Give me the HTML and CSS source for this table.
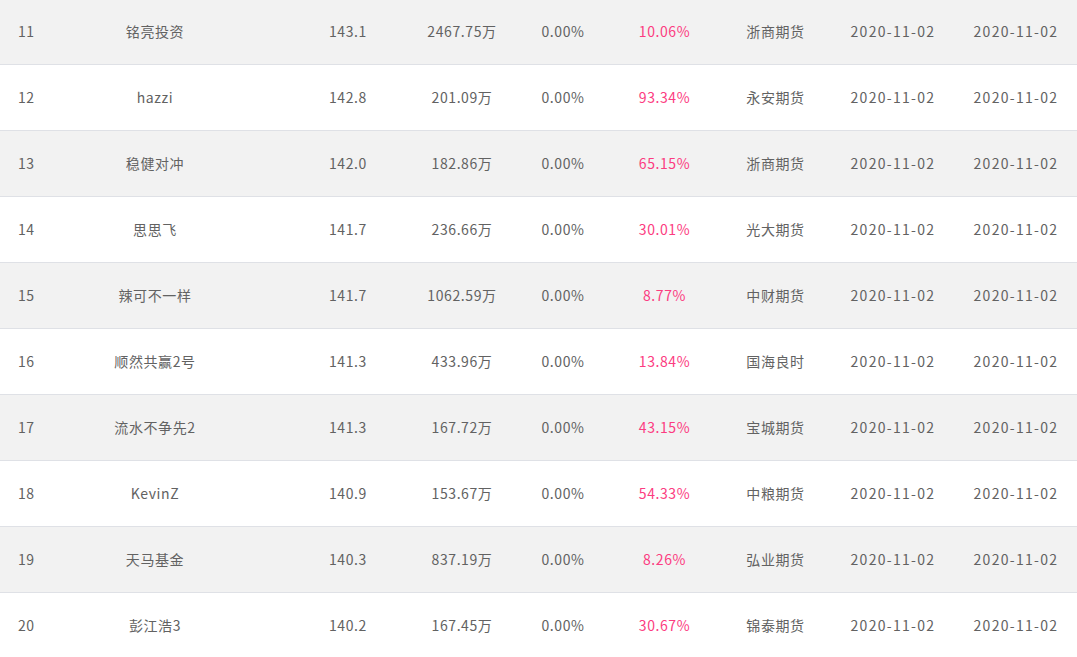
FILE: index.html
```html
<!DOCTYPE html>
<html lang="zh-CN">
<head>
<meta charset="utf-8">
<title>排行</title>
<link rel="stylesheet" href="styles.css">
</head>
<body>
<div class="table">
  <div class="row first"><div class="c rank">11</div><div class="c name">铭亮投资</div><div class="c">143.1</div><div class="c">2467.75万</div><div class="c">0.00%</div><div class="c pink">10.06%</div><div class="c">浙商期货</div><div class="c date">2020-11-02</div><div class="c date">2020-11-02</div></div>
  <div class="row"><div class="c rank">12</div><div class="c name">hazzi</div><div class="c">142.8</div><div class="c">201.09万</div><div class="c">0.00%</div><div class="c pink">93.34%</div><div class="c">永安期货</div><div class="c date">2020-11-02</div><div class="c date">2020-11-02</div></div>
  <div class="row"><div class="c rank">13</div><div class="c name">稳健对冲</div><div class="c">142.0</div><div class="c">182.86万</div><div class="c">0.00%</div><div class="c pink">65.15%</div><div class="c">浙商期货</div><div class="c date">2020-11-02</div><div class="c date">2020-11-02</div></div>
  <div class="row"><div class="c rank">14</div><div class="c name">思思飞</div><div class="c">141.7</div><div class="c">236.66万</div><div class="c">0.00%</div><div class="c pink">30.01%</div><div class="c">光大期货</div><div class="c date">2020-11-02</div><div class="c date">2020-11-02</div></div>
  <div class="row"><div class="c rank">15</div><div class="c name">辣可不一样</div><div class="c">141.7</div><div class="c">1062.59万</div><div class="c">0.00%</div><div class="c pink">8.77%</div><div class="c">中财期货</div><div class="c date">2020-11-02</div><div class="c date">2020-11-02</div></div>
  <div class="row"><div class="c rank">16</div><div class="c name">顺然共赢2号</div><div class="c">141.3</div><div class="c">433.96万</div><div class="c">0.00%</div><div class="c pink">13.84%</div><div class="c">国海良时</div><div class="c date">2020-11-02</div><div class="c date">2020-11-02</div></div>
  <div class="row"><div class="c rank">17</div><div class="c name">流水不争先2</div><div class="c">141.3</div><div class="c">167.72万</div><div class="c">0.00%</div><div class="c pink">43.15%</div><div class="c">宝城期货</div><div class="c date">2020-11-02</div><div class="c date">2020-11-02</div></div>
  <div class="row"><div class="c rank">18</div><div class="c name">KevinZ</div><div class="c">140.9</div><div class="c">153.67万</div><div class="c">0.00%</div><div class="c pink">54.33%</div><div class="c">中粮期货</div><div class="c date">2020-11-02</div><div class="c date">2020-11-02</div></div>
  <div class="row"><div class="c rank">19</div><div class="c name">天马基金</div><div class="c">140.3</div><div class="c">837.19万</div><div class="c">0.00%</div><div class="c pink">8.26%</div><div class="c">弘业期货</div><div class="c date">2020-11-02</div><div class="c date">2020-11-02</div></div>
  <div class="row"><div class="c rank">20</div><div class="c name">彭江浩3</div><div class="c">140.2</div><div class="c">167.45万</div><div class="c">0.00%</div><div class="c pink">30.67%</div><div class="c">锦泰期货</div><div class="c date">2020-11-02</div><div class="c date">2020-11-02</div></div>
</div>
</body>
</html>
```
FILE: styles.css
```css
html, body {
  margin: 0;
  padding: 0;
  background: #ffffff;
}
body {
  font-family: "Noto Sans CJK SC", "Noto Sans", sans-serif;
  font-size: 14px;
  color: #626262;
  letter-spacing: 0.6px;
}
.table {
  display: flex;
  flex-direction: column;
  width: 1077px;
}
.row {
  display: grid;
  grid-template-columns: 51px 249px 96px 132px 70px 133px 89px 146px 100px 1fr;
  align-items: center;
  height: 65px;
  border-top: 1px solid #dfe1e6;
}
.row.first {
  height: 64px;
  border-top: none;
}
.row:nth-child(odd) {
  background: #f2f2f2;
}
.c {
  text-align: center;
  white-space: nowrap;
  line-height: 20px;
  padding-bottom: 2px;
}
.rank {
  text-align: left;
  padding-left: 18px;
}
.name {
  padding-right: 41px;
}
.date {
  letter-spacing: 1.3px;
}
.pink {
  color: #fc3c81;
}
```
